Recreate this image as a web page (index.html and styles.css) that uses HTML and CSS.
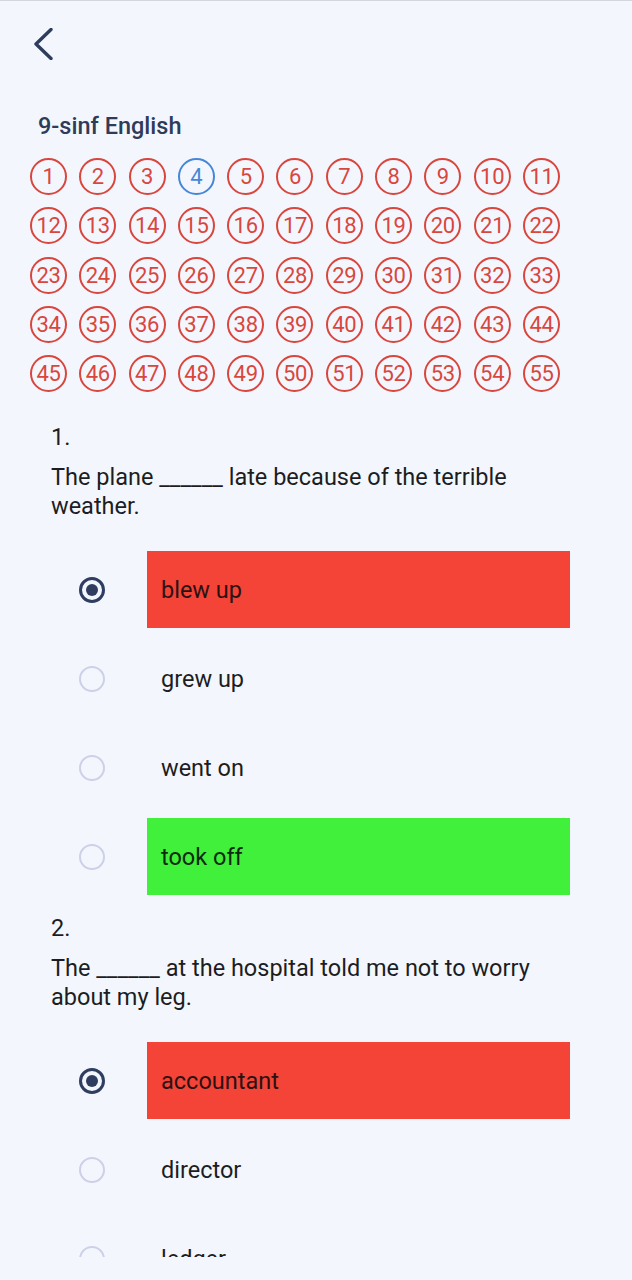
FILE: index.html
```html
<!DOCTYPE html>
<html>
<head>
    <link rel="stylesheet" href="styles.css">
</head>
<body>
    <div class="screen">
        <div class="top-bar">
            <button type="button" class="back-button">
                <svg width="24" height="32" viewBox="0 0 24 32">
                    <path d="M21 1.5 L6 16 L21 30.5" fill="none" stroke="#2f3d5c" stroke-width="3.4" stroke-linecap="round" stroke-linejoin="round"/>
                </svg>
            </button>
        </div>

        <h1 class="title">9-sinf English</h1>

        <div class="question-nav" id="questionNav"></div>

        <!-- Question 1 -->
        <div class="question">
            <div class="question-number">1.</div>
            <div class="question-text">The plane ______ late because of the terrible weather.</div>
            <div class="options">
                <div class="option">
                    <span class="radio checked"></span>
                    <div class="answer wrong">blew up</div>
                </div>
                <div class="option">
                    <span class="radio"></span>
                    <div class="answer">grew up</div>
                </div>
                <div class="option">
                    <span class="radio"></span>
                    <div class="answer">went on</div>
                </div>
                <div class="option">
                    <span class="radio"></span>
                    <div class="answer correct">took off</div>
                </div>
            </div>
        </div>

        <!-- Question 2 -->
        <div class="question">
            <div class="question-number">2.</div>
            <div class="question-text">The ______ at the hospital told me not to worry about my leg.</div>
            <div class="options">
                <div class="option">
                    <span class="radio checked"></span>
                    <div class="answer wrong">accountant</div>
                </div>
                <div class="option">
                    <span class="radio"></span>
                    <div class="answer">director</div>
                </div>
                <div class="option">
                    <span class="radio"></span>
                    <div class="answer">ledger</div>
                </div>
            </div>
        </div>
    </div>

    <script>
        document.addEventListener('DOMContentLoaded', function() {
            const nav = document.getElementById('questionNav');
            const current = 4;

            for (let i = 1; i <= 55; i++) {
                const item = document.createElement('span');
                item.className = 'nav-item' + (i === current ? ' current' : '');
                item.textContent = i;
                nav.appendChild(item);
            }
        });
    </script>
</body>
</html>
```

FILE: styles.css
```css
body {
    margin: 0;
    background: #f3f7fd;
    font-family: Roboto, "Noto Sans", Arial, sans-serif;
    color: #1d1d1f;
}

.screen {
    height: 1256px;
    overflow: hidden;
    border-top: 1px solid #d3d7dd;
}

.top-bar {
    padding: 27px 0 0 30px;
    height: 33px;
}

.back-button {
    background: none;
    border: none;
    padding: 0;
    margin: 0;
    display: block;
    cursor: pointer;
}

.back-button svg {
    display: block;
}

.title {
    margin: 50px 0 0 38px;
    font-size: 23.5px;
    line-height: 30px;
    font-weight: 500;
    color: #2f3b58;
}

.question-nav {
    display: grid;
    grid-template-columns: repeat(11, 37px);
    gap: 12.3px;
    margin: 17px 0 0 30px;
}

.nav-item {
    width: 37px;
    height: 37px;
    box-sizing: border-box;
    border: 2.6px solid #d9463e;
    border-radius: 50%;
    color: #d9463e;
    font-size: 22px;
    letter-spacing: -0.3px;
    display: flex;
    align-items: center;
    justify-content: center;
}

.nav-item.current {
    border-color: #4687d8;
    color: #4687d8;
}

.question {
    padding-left: 51px;
    margin-top: 31px;
}

.question + .question {
    margin-top: 13px;
}

.question-number,
.question-text {
    font-size: 23.5px;
    line-height: 29px;
}

.question-text {
    margin-top: 11px;
    width: 510px;
}

.options {
    margin-top: 24px;
}

.option {
    display: flex;
    align-items: center;
    height: 89px;
    padding-left: 28px;
}

.radio {
    width: 26px;
    height: 26px;
    box-sizing: border-box;
    border: 2.5px solid #cdd0e8;
    border-radius: 50%;
    flex-shrink: 0;
    display: flex;
    align-items: center;
    justify-content: center;
}

.radio.checked {
    border: 3px solid #2f3e60;
}

.radio.checked::after {
    content: "";
    width: 12px;
    height: 12px;
    border-radius: 50%;
    background: #2f3e60;
}

.answer {
    margin-left: 42px;
    width: 423px;
    height: 77px;
    box-sizing: border-box;
    padding-left: 14px;
    display: flex;
    align-items: center;
    font-size: 23.5px;
}

.answer.wrong {
    background: #f44337;
    color: #2a1212;
}

.answer.correct {
    background: #40f03b;
    color: #102a10;
}
```
